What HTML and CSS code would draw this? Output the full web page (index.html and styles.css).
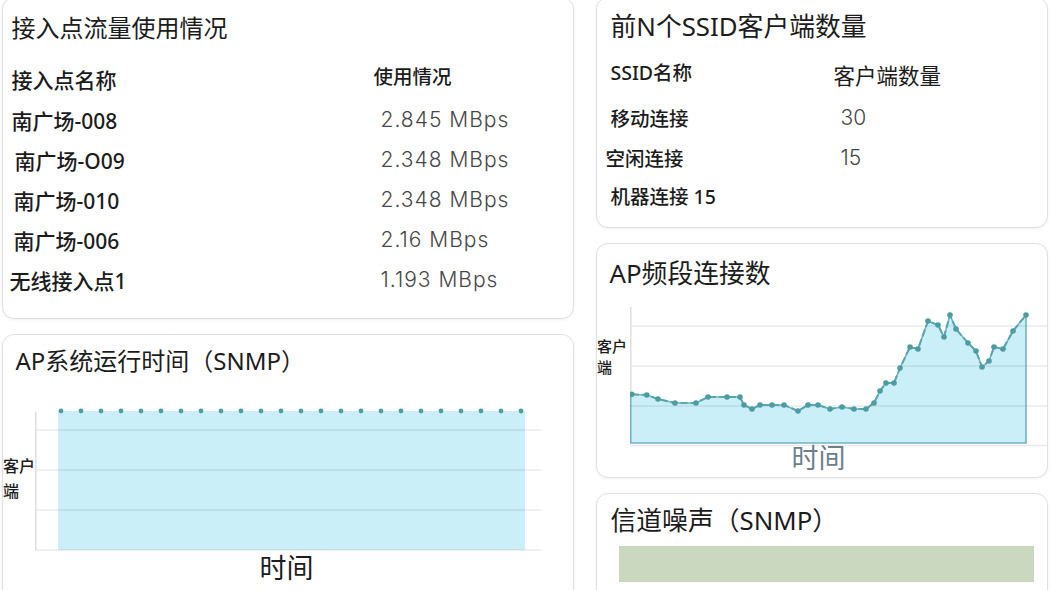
FILE: index.html
```html
<!DOCTYPE html>
<html lang="zh-CN">
<head>
<meta charset="utf-8">
<title>Dashboard</title>
<link rel="stylesheet" href="styles.css">
</head>
<body>
<div class="dash">
  <div class="col">
    <section class="card card-traffic">
      <h2 class="card-title">接入点流量使用情况</h2>
      <div class="traffic-table">
        <div class="th">接入点名称</div>
        <div class="th th-usage">使用情况</div>
        <div class="td name">南广场-008</div>
        <div class="td val">2.845 MBps</div>
        <div class="td name shift-3">南广场-O09</div>
        <div class="td val">2.348 MBps</div>
        <div class="td name shift-2">南广场-010</div>
        <div class="td val">2.348 MBps</div>
        <div class="td name shift-2">南广场-006</div>
        <div class="td val">2.16 MBps</div>
        <div class="td name shift-n2">无线接入点1</div>
        <div class="td val">1.193 MBps</div>
      </div>
    </section>

    <section class="card card-uptime">
      <h2 class="card-title">AP系统运行时间（SNMP）</h2>
      <div class="chart-row chart-uptime">
        <div class="y-label y-label-uptime"><span class="y-line">客户</span><span class="y-line">端</span></div>
        <svg class="chart-svg" width="537" height="155" viewBox="0 0 537 155">
          <rect x="23" y="11" width="467" height="139" fill="#caeff8"/>
          <g stroke="rgba(80,90,100,0.13)" stroke-width="1.5">
            <line x1="0" y1="30" x2="506" y2="30"/>
            <line x1="0" y1="70" x2="506" y2="70"/>
            <line x1="0" y1="110" x2="506" y2="110"/>
            <line x1="0" y1="150" x2="506" y2="150"/>
          </g>
          <line x1="0.75" y1="12" x2="0.75" y2="150" stroke="#dedede" stroke-width="1.5"/>
          <g fill="#4f9ea2">
            <circle cx="26" cy="11" r="2.4"/><circle cx="46" cy="11" r="2.4"/><circle cx="66" cy="11" r="2.4"/><circle cx="86" cy="11" r="2.4"/>
            <circle cx="106" cy="11" r="2.4"/><circle cx="126" cy="11" r="2.4"/><circle cx="146" cy="11" r="2.4"/><circle cx="166" cy="11" r="2.4"/>
            <circle cx="186" cy="11" r="2.4"/><circle cx="206" cy="11" r="2.4"/><circle cx="226" cy="11" r="2.4"/><circle cx="246" cy="11" r="2.4"/>
            <circle cx="266" cy="11" r="2.4"/><circle cx="286" cy="11" r="2.4"/><circle cx="306" cy="11" r="2.4"/><circle cx="326" cy="11" r="2.4"/>
            <circle cx="346" cy="11" r="2.4"/><circle cx="366" cy="11" r="2.4"/><circle cx="386" cy="11" r="2.4"/><circle cx="406" cy="11" r="2.4"/>
            <circle cx="426" cy="11" r="2.4"/><circle cx="446" cy="11" r="2.4"/><circle cx="466" cy="11" r="2.4"/><circle cx="486" cy="11" r="2.4"/>
          </g>
        </svg>
      </div>
      <div class="x-label x-label-uptime">时间</div>
    </section>
  </div>

  <div class="col">
    <section class="card card-ssid">
      <h2 class="card-title title-lg">前N个SSID客户端数量</h2>
      <div class="ssid-table">
        <div class="sh sh-name">SSID名称</div>
        <div class="sh sh-count">客户端数量</div>
        <div class="sd">移动连接</div>
        <div class="sd num">30</div>
        <div class="sd shift-n5">空闲连接</div>
        <div class="sd num">15</div>
        <div class="sd">机器连接 15</div>
        <div class="sd"></div>
      </div>
    </section>

    <section class="card card-band">
      <h2 class="card-title title-lg band-title">AP频段连接数</h2>
      <div class="chart-row chart-band">
        <div class="y-label y-label-band"><span class="y-line">客户</span><span class="y-line">端</span></div>
        <svg class="chart-svg" width="417" height="150" viewBox="0 0 417 150">
          <path d="M0.75,143 L0.75,94 L1.7,94.3 L16.7,95 L28,99 L45,103 L66,103 L78,97 L97,97 L110,97 L114,105 L122,109 L130,105 L142,105 L154,105 L168,111 L178,105 L188,105 L200,109 L212,107 L224,109 L236,109 L244,103 L250,91 L256,83 L264,83 L270,68 L280,47 L288,49 L298,21 L308,25 L314,37 L320,15 L326,29 L338,43 L346,51 L352,67 L359,61 L364,47 L373,49 L383,31 L396,15 L396,143 Z" fill="#caeff8" stroke="#72b5c0" stroke-width="1.6"/>
          <g stroke="rgba(80,90,100,0.13)" stroke-width="1.5">
            <line x1="0" y1="26" x2="417" y2="26"/>
            <line x1="0" y1="66" x2="417" y2="66"/>
            <line x1="0" y1="106" x2="417" y2="106"/>
            <line x1="0" y1="145.5" x2="417" y2="145.5"/>
          </g>
          <line x1="0.75" y1="7" x2="0.75" y2="94" stroke="#dedede" stroke-width="1.5"/>
          <polyline points="1.7,94.3 16.7,95 28,99 45,103 66,103 78,97 97,97 110,97 114,105 122,109 130,105 142,105 154,105 168,111 178,105 188,105 200,109 212,107 224,109 236,109 244,103 250,91 256,83 264,83 270,68 280,47 288,49 298,21 308,25 314,37 320,15 326,29 338,43 346,51 352,67 359,61 364,47 373,49 383,31 396,15" fill="none" stroke="#5aa6ad" stroke-width="2" stroke-dasharray="7 3"/>
          <g fill="#4d9ca1">
            <circle cx="1.7" cy="94.3" r="2.8"/><circle cx="16.7" cy="95" r="2.8"/><circle cx="28" cy="99" r="2.8"/><circle cx="45" cy="103" r="2.8"/>
            <circle cx="66" cy="103" r="2.8"/><circle cx="78" cy="97" r="2.8"/><circle cx="97" cy="97" r="2.8"/><circle cx="110" cy="97" r="2.8"/>
            <circle cx="114" cy="105" r="2.8"/><circle cx="122" cy="109" r="2.8"/><circle cx="130" cy="105" r="2.8"/><circle cx="142" cy="105" r="2.8"/>
            <circle cx="154" cy="105" r="2.8"/><circle cx="168" cy="111" r="2.8"/><circle cx="178" cy="105" r="2.8"/><circle cx="188" cy="105" r="2.8"/>
            <circle cx="200" cy="109" r="2.8"/><circle cx="212" cy="107" r="2.8"/><circle cx="224" cy="109" r="2.8"/><circle cx="236" cy="109" r="2.8"/>
            <circle cx="244" cy="103" r="2.8"/><circle cx="250" cy="91" r="2.8"/><circle cx="256" cy="83" r="2.8"/><circle cx="264" cy="83" r="2.8"/>
            <circle cx="270" cy="68" r="2.8"/><circle cx="280" cy="47" r="2.8"/><circle cx="288" cy="49" r="2.8"/><circle cx="298" cy="21" r="2.8"/>
            <circle cx="308" cy="25" r="2.8"/><circle cx="314" cy="37" r="2.8"/><circle cx="320" cy="15" r="2.8"/><circle cx="326" cy="29" r="2.8"/>
            <circle cx="338" cy="43" r="2.8"/><circle cx="346" cy="51" r="2.8"/><circle cx="352" cy="67" r="2.8"/><circle cx="359" cy="61" r="2.8"/>
            <circle cx="364" cy="47" r="2.8"/><circle cx="373" cy="49" r="2.8"/><circle cx="383" cy="31" r="2.8"/><circle cx="396" cy="15" r="2.8"/>
          </g>
        </svg>
      </div>
      <div class="x-label x-label-band">时间</div>
    </section>

    <section class="card card-noise">
      <h2 class="card-title title-lg">信道噪声（SNMP）</h2>
      <div class="noise-bar"></div>
    </section>
  </div>
</div>
</body>
</html>
```

FILE: styles.css
```css
* {
  box-sizing: border-box;
}

html, body {
  margin: 0;
  padding: 0;
}

body {
  width: 1050px;
  height: 590px;
  overflow: hidden;
  background: #ffffff;
  color: #1c1c1c;
  font-family: "Noto Sans", "Noto Sans CJK SC", sans-serif;
}

.dash {
  display: grid;
  grid-template-columns: 572px 452px;
  column-gap: 22px;
  padding-left: 2px;
  margin-top: -3px;
  align-items: start;
}

.col {
  display: flex;
  flex-direction: column;
  gap: 15px;
}

.card {
  background: #ffffff;
  border: 1.5px solid #e3dfdf;
  border-radius: 12px;
  box-shadow: 0 1px 3px rgba(0, 0, 0, 0.06);
  overflow: hidden;
}

.card-title {
  margin: 0;
  font-size: 24px;
  font-weight: 400;
  line-height: 32px;
  white-space: nowrap;
}

.title-lg {
  font-size: 25.8px;
}

/* Traffic card */
.card-traffic {
  height: 322px;
  padding: 14px 0 0 8.5px;
}

.traffic-table {
  display: grid;
  grid-template-columns: 362px 1fr;
  grid-template-rows: 42px repeat(5, 40px);
  margin-top: 13.5px;
}

.th,
.td {
  display: flex;
  align-items: center;
  font-size: 21px;
  white-space: nowrap;
}

.th {
  font-weight: 500;
}

.th-usage {
  font-size: 19.5px;
  padding-bottom: 7px;
}

.name {
  font-weight: 500;
}

.val {
  padding-left: 7px;
  font-family: "Inter", "Liberation Sans", sans-serif;
  font-weight: 300;
  font-size: 21px;
  letter-spacing: 1px;
  color: #474747;
}

.shift-3 { padding-left: 3px; }
.shift-2 { padding-left: 2px; }
.shift-n2 { margin-left: -2px; }
.shift-n5 { margin-left: -5px; }

/* Uptime card */
.card-uptime {
  height: 272px;
  padding-top: 9.5px;
}

.card-uptime .card-title {
  padding-left: 12.5px;
}

.chart-row {
  display: flex;
  align-items: flex-start;
}

.chart-uptime {
  margin-top: 23px;
}

.y-label {
  flex: none;
  font-weight: 500;
  color: #1c1c1c;
}

.y-line {
  display: block;
  white-space: nowrap;
}

.y-label-uptime {
  width: 31.5px;
  padding-top: 54.5px;
  font-size: 16px;
  line-height: 25px;
}

.chart-svg {
  display: block;
  flex: none;
}

.x-label {
  font-size: 27px;
  line-height: 30px;
  white-space: nowrap;
}

.x-label-uptime {
  margin-top: -2px;
  padding-left: 256.5px;
  color: #1c1c1c;
}

/* SSID card */
.card-ssid {
  height: 231px;
  padding: 12px 0 0 13.5px;
}

.ssid-table {
  display: grid;
  grid-template-columns: 223px 1fr;
  grid-template-rows: 43px 40px 40px 36px;
  margin-top: 12.5px;
}

.sh,
.sd {
  display: flex;
  align-items: center;
  white-space: nowrap;
}

.sh {
  align-items: flex-start;
  height: 40px;
  line-height: 40px;
}

.sh-name {
  font-size: 19.5px;
  font-weight: 500;
  line-height: 36px;
}

.sh-count {
  font-size: 21.5px;
  font-weight: 400;
  line-height: 42px;
}

.sd {
  font-size: 19.5px;
  font-weight: 500;
}

.num {
  padding-left: 7px;
  font-family: "Inter", "Liberation Sans", sans-serif;
  font-weight: 300;
  font-size: 21px;
  color: #474747;
}

/* Band card */
.card-band {
  height: 235px;
  padding-top: 12.5px;
}

.band-title {
  padding-left: 12.5px;
}

.chart-band {
  margin-top: 11px;
}

.y-label-band {
  width: 32.5px;
  padding-top: 36.5px;
  font-size: 15px;
  line-height: 21px;
}

.x-label-band {
  margin-top: -7px;
  padding-left: 194.5px;
  color: #6c7f8a;
}

/* Noise card */
.card-noise {
  height: 112px;
  padding: 9.5px 0 0 13.5px;
}

.noise-bar {
  width: 415px;
  height: 36px;
  margin: 10px 0 0 8px;
  background: #c9d8bf;
}
```
